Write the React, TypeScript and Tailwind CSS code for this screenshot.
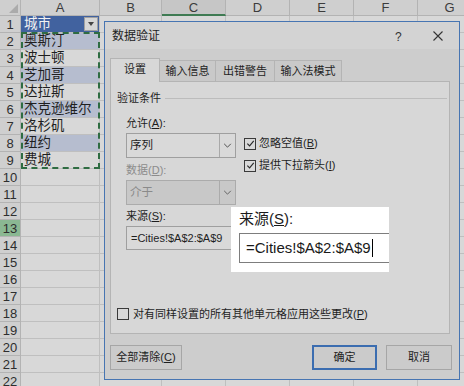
import React from "react";

const cols = [
  { key: "A", w: "w-[79px]" },
  { key: "B", w: "w-[62px]" },
  { key: "C", w: "w-[64px]" },
  { key: "D", w: "w-[64px]" },
  { key: "E", w: "w-[64px]" },
  { key: "F", w: "w-[64px]" },
  { key: "G", w: "w-[64px]" },
];

const cities = ["城市", "奥斯汀", "波士顿", "芝加哥", "达拉斯", "杰克逊维尔", "洛杉矶", "纽约", "费城"];
const rows = Array.from({ length: 22 }, (_, i) => i + 1);

function Check({ checked }: { checked?: boolean }) {
  return (
    <span className="flex h-[12px] w-[12px] shrink-0 items-center justify-center border border-[#3a3a3a] bg-[#d9d9d9]">
      {checked && (
        <svg viewBox="0 0 10 10" className="h-[9px] w-[9px]">
          <path d="M1.5 5.2 L4 7.6 L8.6 2.2" fill="none" stroke="#2a2a2a" strokeWidth="1.3" />
        </svg>
      )}
    </span>
  );
}

function Chevron({ dim }: { dim?: boolean }) {
  return (
    <svg viewBox="0 0 10 6" className="h-[5px] w-[9px]">
      <path d="M1 1 L5 5 L9 1" fill="none" stroke={dim ? "#5a5a5a" : "#444"} strokeWidth="1.1" />
    </svg>
  );
}

function Sheet() {
  return (
    <div className="flex flex-col">
      {/* column headers */}
      <div className="flex h-[16px]">
        <div className="relative w-[21px] shrink-0 border-r border-b border-[#b3b3b3] bg-[#cfcfcf]">
          <svg viewBox="0 0 9 9" className="absolute bottom-[2px] right-[2px] h-[9px] w-[9px]">
            <path d="M9 0 L9 9 L0 9 Z" fill="#ababab" />
          </svg>
        </div>
        {cols.map((c) => (
          <div
            key={c.key}
            className={`${c.w} flex shrink-0 items-center justify-center border-r border-[#b3b3b3] text-[13px] leading-none text-[#3c3c3c] ${
              c.key === "C" ? "border-b-2 border-b-[#3f7b53] bg-[#c6c6c6]" : "border-b bg-[#cfcfcf]"
            }`}
          >
            {c.key}
          </div>
        ))}
      </div>
      {rows.map((r) => (
        <div key={r} className="flex h-[17px]">
          <div
            className={`flex w-[21px] shrink-0 items-center justify-center border-r border-b border-[#b3b3b3] text-[13px] leading-none text-[#2e2e2e] ${
              r === 13 ? "bg-[#8ab892]" : "bg-[#cfcfcf]"
            }`}
          >
            {r}
          </div>
          {cols.map((c) => {
            const isA = c.key === "A";
            const name = isA ? cities[r - 1] : undefined;
            let bg = "bg-[#d8d8d8]";
            if (isA && r === 1) bg = "bg-[#41629f]";
            else if (isA && r <= 9 && r % 2 === 0) bg = "bg-[#b6bdcf]";
            return (
              <div
                key={c.key}
                className={`${c.w} ${bg} relative flex shrink-0 items-center border-r border-b border-[#bfbfbf] pl-[3px] text-[13.5px] leading-none ${
                  r === 1 && isA ? "text-[#f2f2f2]" : "text-[#1f1f1f]"
                }`}
              >
                {name}
                {isA && r === 1 && (
                  <span className="absolute right-[1px] top-[1px] flex h-[14px] w-[14px] items-center justify-center border border-[#a0a0a0] bg-[#d6d6d6]">
                    <span className="h-0 w-0 border-x-[3.5px] border-t-[4px] border-x-transparent border-t-[#444]" />
                  </span>
                )}
              </div>
            );
          })}
        </div>
      ))}
    </div>
  );
}

function Dialog() {
  return (
    <div className="absolute left-[104px] top-[21px] flex h-[359px] w-[356px] flex-col border border-[#4775b2] bg-[#cdcdcd] text-[11px] text-[#1e1e1e]">
      {/* title bar */}
      <div className="relative flex h-[27px] shrink-0 items-center bg-[#d3d3d3] pl-[7px] text-[12px]">
        数据验证
        <span className="absolute left-[290px] top-[6px] text-[12px] text-[#333]">?</span>
        <svg viewBox="0 0 10 10" className="absolute left-[328px] top-[9px] h-[10px] w-[10px]">
          <path d="M0.5 0.5 L9.5 9.5 M9.5 0.5 L0.5 9.5" stroke="#333" strokeWidth="1.1" />
        </svg>
      </div>

      <div className="flex flex-1 flex-col px-[5px] pt-[8px]">
        {/* tabs */}
        <div className="flex h-[24px] items-end">
          <div className="relative z-10 -mb-px flex h-[24px] w-[50px] items-center justify-center border border-b-0 border-[#b4b4b4] bg-[#d7d7d7] pb-[2px]">
            设置
          </div>
          {["输入信息", "出错警告", "输入法模式"].map((t, i) => (
            <div
              key={t}
              className={`flex h-[21px] items-center justify-center border border-l-0 border-b-0 border-[#b4b4b4] bg-[#c9c9c9] ${
                i === 0 ? "w-[56px]" : i === 1 ? "w-[59px]" : "w-[67px]"
              }`}
            >
              {t}
            </div>
          ))}
        </div>

        {/* panel */}
        <div className="flex h-[253px] w-[340px] flex-col border border-[#b4b4b4] bg-[#d7d7d7]">
          <div className="mt-[9px] flex h-[14px] items-center pl-[6px] pr-[2px] leading-[14px]">
            <span>验证条件</span>
            <span className="ml-[4px] h-px flex-1 bg-[#bcbcbc]" />
          </div>

          <div className="flex flex-col pl-[15px] pt-[11px]">
            <div className="flex">
              <div className="flex w-[110px] flex-col">
                <span className="h-[14px] leading-[14px]">
                  允许(<u>A</u>):
                </span>
                <div className="mt-[3px] flex h-[25px] border border-[#9f9f9f] bg-[#d9d9d9]">
                  <span className="flex flex-1 items-center pl-[3px] text-[11.5px]">序列</span>
                  <span className="flex w-[16px] items-center justify-center border-l border-[#a9a9a9]">
                    <Chevron />
                  </span>
                </div>
                <span className="mt-[5px] h-[14px] leading-[14px] text-[#8c8c8c]">
                  数据(<u>D</u>):
                </span>
                <div className="mt-[3px] flex h-[25px] border border-[#ababab] bg-[#c8c8c8] text-[#8a8a8a]">
                  <span className="flex flex-1 items-center pl-[3px] text-[11.5px]">介于</span>
                  <span className="flex w-[16px] items-center justify-center border-l border-[#ababab]">
                    <Chevron dim />
                  </span>
                </div>
              </div>
              <div className="ml-[8px] flex flex-col gap-[9px] pt-[21px]">
                <label className="flex h-[13px] items-center gap-[3px]">
                  <Check checked />
                  <span>
                    忽略空值(<u>B</u>)
                  </span>
                </label>
                <label className="flex h-[13px] items-center gap-[3px]">
                  <Check checked />
                  <span>
                    提供下拉箭头(<u>I</u>)
                  </span>
                </label>
              </div>
            </div>
            <span className="mt-[4px] h-[14px] leading-[14px]">
              来源(<u>S</u>):
            </span>
            <div className="mt-[3px] flex h-[24px] w-[258px] items-center border border-[#9f9f9f] bg-[#d9d9d9] pl-[4px] text-[11px]">
              =Cities!$A$2:$A$9
            </div>
          </div>

          <label className="mb-[12px] ml-[6px] mt-auto flex h-[14px] items-center gap-[4px]">
            <Check />
            <span>
              对有同样设置的所有其他单元格应用这些更改(<u>P</u>)
            </span>
          </label>
        </div>

        {/* buttons */}
        <div className="mt-[11px] flex h-[25px] items-stretch pr-[2px]">
          <button className="w-[72px] border border-[#a6a6a6] bg-[#cbcbcb]">
            全部清除(<u>C</u>)
          </button>
          <button className="ml-auto w-[65px] border-2 border-[#3b6db0] bg-[#cbcbcb]">确定</button>
          <button className="ml-[9px] w-[66px] border border-[#a6a6a6] bg-[#cbcbcb]">取消</button>
        </div>
      </div>
    </div>
  );
}

export default function App() {
  return (
    <div className="relative h-[386px] w-[464px] overflow-hidden bg-[#d8d8d8] font-['Liberation_Sans','Noto_Sans_CJK_SC',sans-serif]">
      <Sheet />
      {/* copy marquee around A2:A9 */}
      <div className="pointer-events-none absolute left-[21px] top-[32px] h-[137px] w-[79px] border-2 border-dashed border-[#2e6c42]" />
      <Dialog />
      {/* zoomed callout of the source field */}
      <div className="absolute left-[231px] top-[207px] flex h-[65px] w-[158px] flex-col bg-white pl-[8px] pt-[2px] text-[#1a1a1a]">
        <span className="text-[15px] leading-[20px]">
          来源(<u>S</u>):
        </span>
        <div className="mt-[4px] flex h-[30px] items-center border border-r-0 border-[#7d7d7d] pl-[6px] text-[15px]">
          =Cities!$A$2:$A$9
          <span className="ml-px h-[18px] w-[1.5px] bg-black" />
        </div>
      </div>
    </div>
  );
}
